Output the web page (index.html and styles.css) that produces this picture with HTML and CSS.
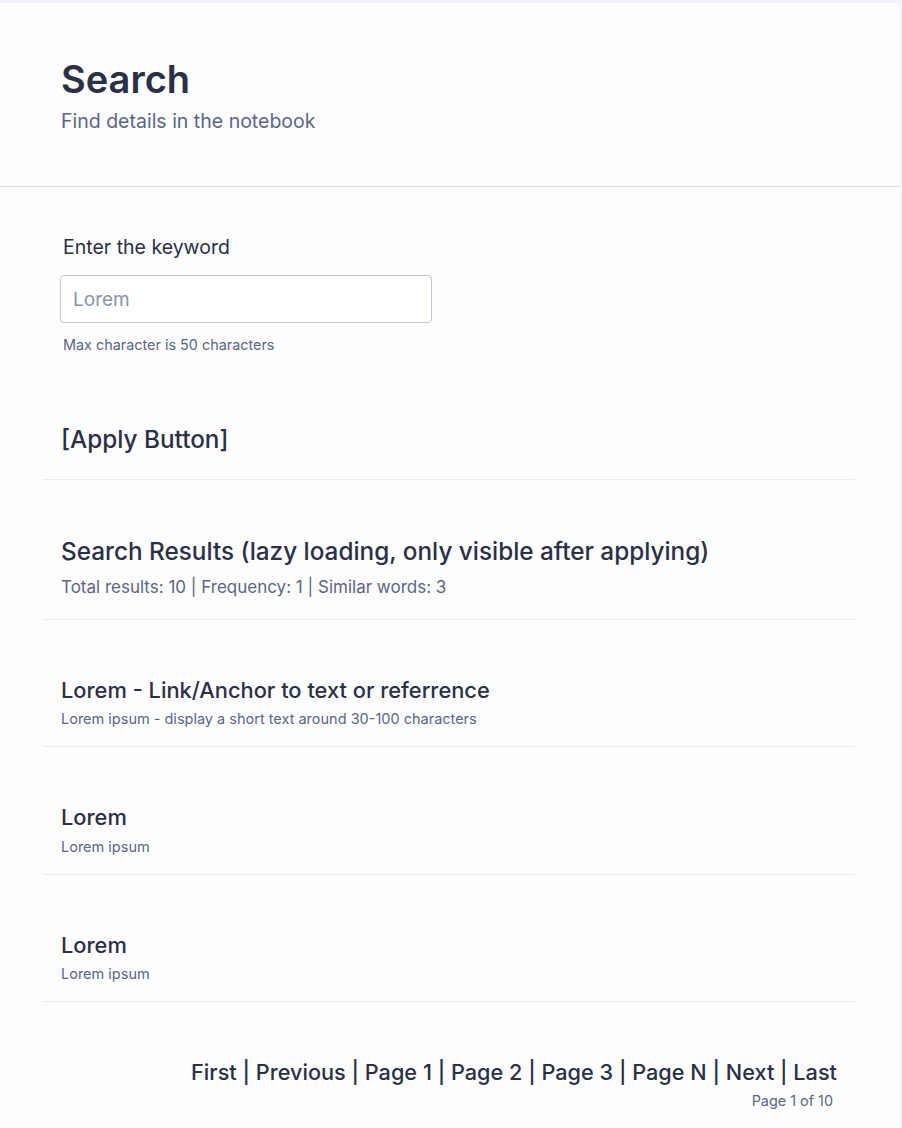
FILE: index.html
```html
<!DOCTYPE html>
<html lang="en">
<head>
<meta charset="utf-8">
<title>Search</title>
<link rel="stylesheet" href="styles.css">
</head>
<body>
<div class="card">
  <header class="page-header">
    <h1 class="page-title">Search</h1>
    <p class="page-subtitle">Find details in the notebook</p>
  </header>
  <main class="content">
    <section class="form-block">
      <label class="field-label" for="kw">Enter the keyword</label>
      <input class="field-input" id="kw" type="text" placeholder="Lorem">
      <p class="field-help">Max character is 50 characters</p>
    </section>
    <section class="block apply-block">
      <h2 class="block-title">[Apply Button]</h2>
    </section>
    <section class="block results-head">
      <h2 class="block-title">Search Results (lazy loading, only visible after applying)</h2>
      <p class="results-meta">Total results: 10 | Frequency: 1 | Similar words: 3</p>
    </section>
    <article class="block item">
      <h3 class="item-title">Lorem - Link/Anchor to text or referrence</h3>
      <p class="item-text">Lorem ipsum - display a short text around 30-100 characters</p>
    </article>
    <article class="block item">
      <h3 class="item-title">Lorem</h3>
      <p class="item-text">Lorem ipsum</p>
    </article>
    <article class="block item">
      <h3 class="item-title">Lorem</h3>
      <p class="item-text">Lorem ipsum</p>
    </article>
    <nav class="pager">
      <div class="pager-links">First | Previous | Page 1 | Page 2 | Page 3 | Page N | Next | Last</div>
      <div class="pager-info">Page 1 of 10</div>
    </nav>
  </main>
</div>
</body>
</html>
```
FILE: styles.css
```css
* { box-sizing: border-box; }
html, body { margin: 0; padding: 0; }
body {
  background: #f2f2fc;
  font-family: Inter, "Noto Sans", sans-serif;
  color: #2a3045;
  min-height: 1128px;
}
.card {
  margin: 3px 2px 0 0;
  background: #fdfdfe;
  border-top-right-radius: 5px;
  min-height: 1125px;
}
.page-header {
  padding: 54px 0 53px 61px;
  border-bottom: 1px solid #dcdbea;
}
.page-title {
  margin: 0;
  font-size: 38px;
  line-height: 44px;
  font-weight: 600;
  color: #2a3045;
}
.page-subtitle {
  margin: 8px 0 0;
  font-size: 19.5px;
  line-height: 24px;
  color: #5b6684;
}
.content {
  margin: 0 45px 0 43px;
}
.form-block {
  padding: 48px 17px 0;
  display: flex;
  flex-direction: column;
  align-items: flex-start;
}
.field-label {
  margin-left: 3px;
  font-size: 19.5px;
  line-height: 24px;
  color: #2a3045;
}
.field-input {
  margin-top: 16px;
  width: 372px;
  height: 48px;
  border: 1px solid #c3c7d3;
  border-radius: 4px;
  padding: 0 12px;
  font-family: inherit;
  font-size: 19px;
  color: #2a3045;
  background: #fff;
  outline: none;
}
.field-input::placeholder { color: #8a93ab; }
.field-help {
  margin: 12px 0 0 3px;
  font-size: 14.4px;
  line-height: 20px;
  color: #5b6684;
}
.block {
  padding: 0 18px;
  border-bottom: 1px solid #ececf0;
}
.apply-block { padding-top: 68px; padding-bottom: 24px; }
.block-title {
  margin: 0;
  font-size: 24.3px;
  line-height: 32px;
  font-weight: 500;
  color: #2a3045;
}
.results-head { padding-top: 55px; padding-bottom: 20px; }
.results-meta {
  margin: 8px 0 0;
  font-size: 17px;
  line-height: 24px;
  color: #5b6684;
}
.item { padding-top: 56px; padding-bottom: 17px; }
.item-title {
  margin: 0;
  font-size: 21.85px;
  line-height: 28px;
  font-weight: 500;
  color: #2a3045;
}
.item-text {
  margin: 5.4px 0 0;
  font-size: 14.5px;
  line-height: 20px;
  color: #5b6684;
}
.pager {
  padding: 56px 18px 0;
  display: flex;
  flex-direction: column;
  align-items: flex-end;
}
.pager-links {
  font-size: 21.7px;
  line-height: 28px;
  font-weight: 500;
  color: #2a3045;
}
.pager-info {
  margin-top: 5px;
  margin-right: 4px;
  font-size: 14.4px;
  line-height: 20px;
  color: #5b6684;
}
```
